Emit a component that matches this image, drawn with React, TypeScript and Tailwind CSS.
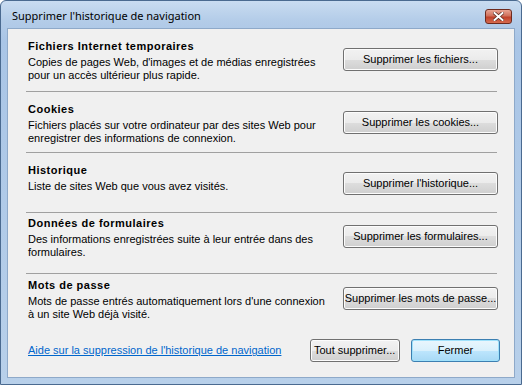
import React from 'react'

const sections = [
  {
    title: 'Fichiers Internet temporaires',
    lines: ["Copies de pages Web, d'images et de médias enregistrées", 'pour un accès ultérieur plus rapide.'],
    action: 'Supprimer les fichiers...',
    pad: 'pt-[11px] h-[63px]',
  },
  {
    title: 'Cookies',
    lines: ['Fichiers placés sur votre ordinateur par des sites Web pour', 'enregistrer des informations de connexion.'],
    action: 'Supprimer les cookies...',
    pad: 'pt-[11px] h-[61px]',
  },
  {
    title: 'Historique',
    lines: ['Liste de sites Web que vous avez visités.'],
    action: "Supprimer l'historique...",
    pad: 'pt-[11px] h-[60px]',
  },
  {
    title: 'Données de formulaires',
    lines: ['Des informations enregistrées suite à leur entrée dans des', 'formulaires.'],
    action: 'Supprimer les formulaires...',
    pad: 'pt-[4px] h-[61px]',
  },
  {
    title: 'Mots de passe',
    lines: ["Mots de passe entrés automatiquement lors d'une connexion", 'à un site Web déjà visité.'],
    action: 'Supprimer les mots de passe...',
    pad: 'pt-[5px] h-[50px]',
  },
]

function VistaButton({ children, className = '', primary = false }: { children: React.ReactNode; className?: string; primary?: boolean }) {
  return (
    <button
      type="button"
      className={
        'h-[23px] shrink-0 rounded-[3px] border text-[11px] leading-none text-black ' +
        (primary
          ? 'border-[#3c7fb1] bg-[linear-gradient(#eaf6fd_0%,#d9f0fc_50%,#bee6fd_50%,#a7d9f5_100%)] shadow-[inset_0_0_0_1px_#9fe1fb]'
          : 'border-[#707070] bg-[linear-gradient(#f2f2f2_0%,#ebebeb_50%,#dddddd_50%,#cfcfcf_100%)] shadow-[inset_0_0_0_1px_#fcfcfc]') +
        ' ' +
        className
      }
    >
      {children}
    </button>
  )
}

export default function App() {
  return (
    <div className="h-[385px] w-[522px] overflow-hidden bg-white font-['Liberation_Sans',sans-serif]">
      <div className="flex h-full w-full flex-col rounded-t-[6px] border border-[#4a6a90] bg-[linear-gradient(180deg,#c9dcf1_0%,#b3cce8_20px,#a9c5e6_40px,#b8d0ea_100%)] px-[6px] pb-[6px]">
        <div className="flex h-[27px] shrink-0 items-center justify-between pl-[5px]">
          <span className="pt-[4px] font-['Noto_Sans',sans-serif] text-[11px] text-black">Supprimer l'historique de navigation</span>
          <div className="mr-[3px] mt-[4px] flex h-[15px] w-[27px] items-center justify-center rounded-[3px] border border-[#6d2a1e] bg-[linear-gradient(#e8a493_0%,#d0705b_45%,#c0412a_55%,#d66b4f_100%)]">
            <svg width="11" height="9" viewBox="0 0 11 9">
              <path d="M1.5 1 L9.5 8 M9.5 1 L1.5 8" stroke="#5a2a20" strokeWidth="3.4" strokeLinecap="square" />
              <path d="M1.5 1 L9.5 8 M9.5 1 L1.5 8" stroke="#ffffff" strokeWidth="2" strokeLinecap="square" />
            </svg>
          </div>
        </div>
        <div className="flex flex-1 flex-col border border-[#8ea9c9] bg-[#f0f0f0] pl-[18px] pr-[17px]">
          {sections.map((s, i) => (
            <div
              key={s.title}
              className={'flex shrink-0 items-start justify-between pl-[2px] ' + s.pad + (i < sections.length - 1 ? ' border-b border-[#a0a0a0]' : '')}
            >
              <div className="text-[11px] leading-[13px] text-black">
                <div className="mb-[3px] font-bold tracking-[0.5px]">{s.title}</div>
                {s.lines.map(l => (
                  <div key={l}>{l}</div>
                ))}
              </div>
              <VistaButton className="-mr-[1px] mt-[8px] w-[155px]">{s.action}</VistaButton>
            </div>
          ))}
          <div className="flex items-center justify-between pl-[2px] pt-[15px]">
            <a href="#" className="text-[11px] text-[#0066cc] underline">Aide sur la suppression de l'historique de navigation</a>
            <div className="-mr-[3px] flex gap-[11px]">
              <VistaButton className="w-[90px] px-[3px] text-left">Tout supprimer...</VistaButton>
              <VistaButton primary className="w-[89px]">Fermer</VistaButton>
            </div>
          </div>
        </div>
      </div>
    </div>
  )
}
